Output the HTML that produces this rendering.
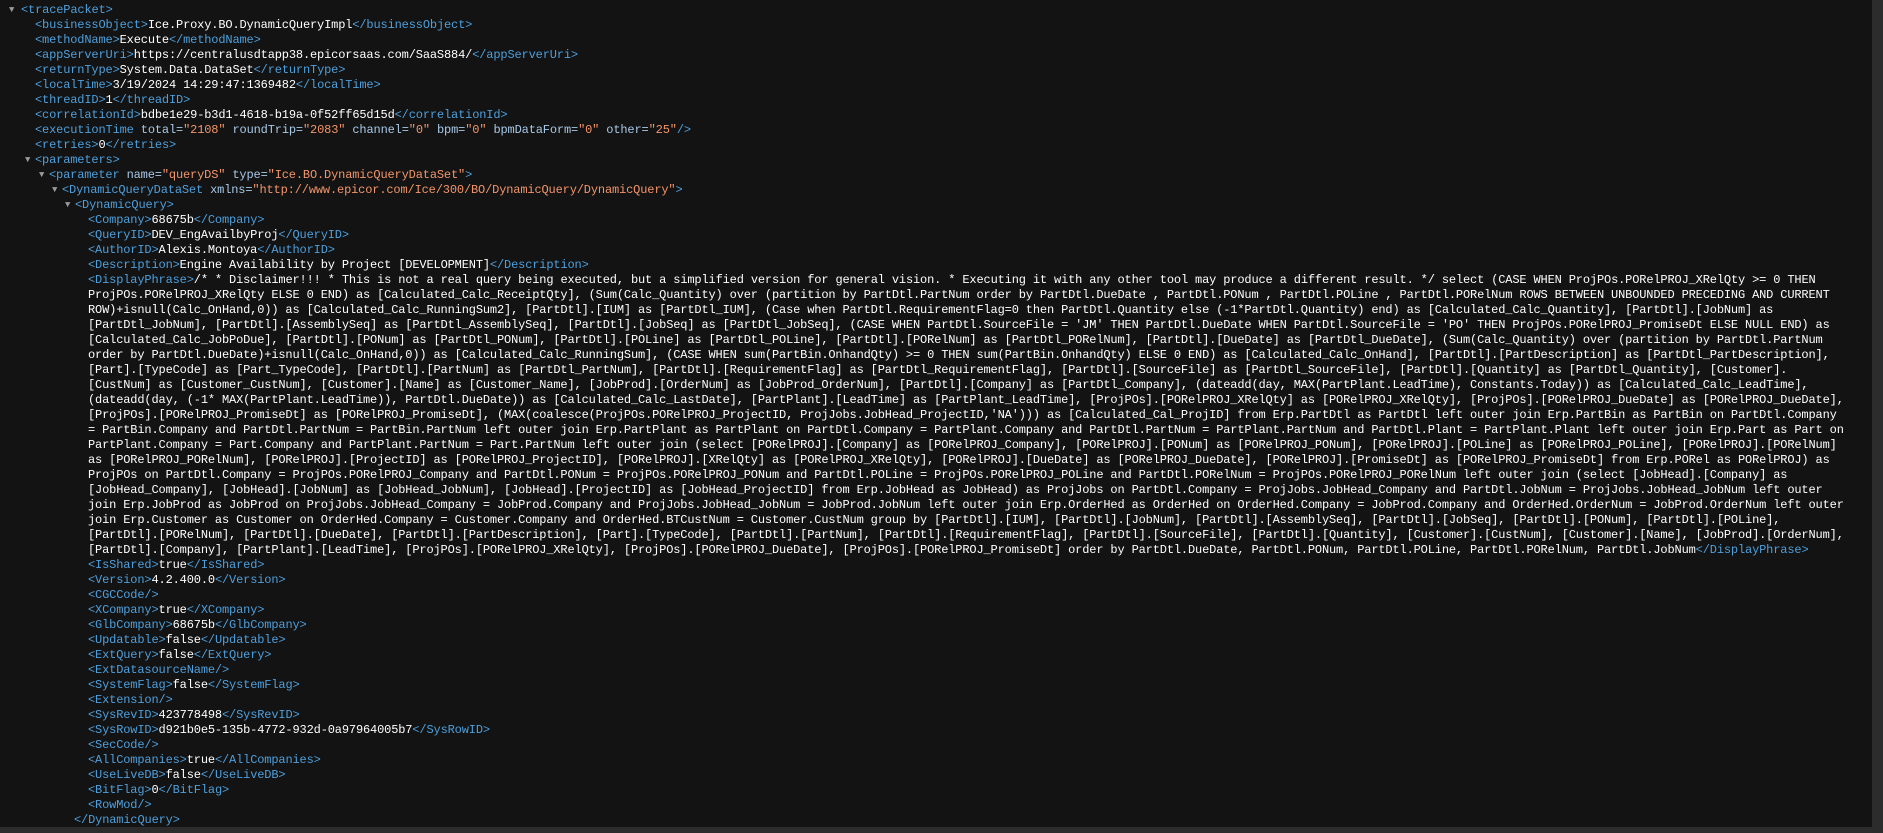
<!DOCTYPE html>
<html><head><meta charset="utf-8">
<style>
html,body{margin:0;padding:0;background:#131313;width:1883px;height:833px;overflow:hidden;}
#c{position:relative;width:1883px;height:833px;font-family:"Liberation Mono",monospace;font-size:12px;letter-spacing:-0.15px;color:#ffffff;}
.l{position:absolute;height:15px;line-height:15px;white-space:pre;}
.t{color:#4f9fdc;}
.a{color:#a8c8e6;}
.v{color:#f2956a;}
.tri{position:absolute;color:#9a9a9a;font-size:9px;line-height:15px;}
#sb{position:absolute;left:1872px;top:0;width:11px;height:833px;background:#2c2c2c;}
#hb{position:absolute;left:0;top:827px;width:1872px;height:6px;background:#2c2c2c;}
</style></head><body><div id="c">
<span class="tri" style="left:9px;top:3px">▼</span>
<div class="l" style="left:21px;top:3px"><span class="t">&lt;tracePacket&gt;</span></div>
<div class="l" style="left:35px;top:18px"><span class="t">&lt;businessObject&gt;</span>Ice.Proxy.BO.DynamicQueryImpl<span class="t">&lt;/businessObject&gt;</span></div>
<div class="l" style="left:35px;top:33px"><span class="t">&lt;methodName&gt;</span>Execute<span class="t">&lt;/methodName&gt;</span></div>
<div class="l" style="left:35px;top:48px"><span class="t">&lt;appServerUri&gt;</span>https://centralusdtapp38.epicorsaas.com/SaaS884/<span class="t">&lt;/appServerUri&gt;</span></div>
<div class="l" style="left:35px;top:63px"><span class="t">&lt;returnType&gt;</span>System.Data.DataSet<span class="t">&lt;/returnType&gt;</span></div>
<div class="l" style="left:35px;top:78px"><span class="t">&lt;localTime&gt;</span>3/19/2024 14:29:47:1369482<span class="t">&lt;/localTime&gt;</span></div>
<div class="l" style="left:35px;top:93px"><span class="t">&lt;threadID&gt;</span>1<span class="t">&lt;/threadID&gt;</span></div>
<div class="l" style="left:35px;top:108px"><span class="t">&lt;correlationId&gt;</span>bdbe1e29-b3d1-4618-b19a-0f52ff65d15d<span class="t">&lt;/correlationId&gt;</span></div>
<div class="l" style="left:35px;top:123px"><span class="t">&lt;executionTime</span> <span class="a">total=</span><span class="v">"2108"</span> <span class="a">roundTrip=</span><span class="v">"2083"</span> <span class="a">channel=</span><span class="v">"0"</span> <span class="a">bpm=</span><span class="v">"0"</span> <span class="a">bpmDataForm=</span><span class="v">"0"</span> <span class="a">other=</span><span class="v">"25"</span><span class="t">/&gt;</span></div>
<div class="l" style="left:35px;top:138px"><span class="t">&lt;retries&gt;</span>0<span class="t">&lt;/retries&gt;</span></div>
<span class="tri" style="left:25px;top:153px">▼</span>
<div class="l" style="left:35px;top:153px"><span class="t">&lt;parameters&gt;</span></div>
<span class="tri" style="left:39px;top:168px">▼</span>
<div class="l" style="left:49px;top:168px"><span class="t">&lt;parameter</span> <span class="a">name=</span><span class="v">"queryDS"</span> <span class="a">type=</span><span class="v">"Ice.BO.DynamicQueryDataSet"</span><span class="t">&gt;</span></div>
<span class="tri" style="left:52px;top:183px">▼</span>
<div class="l" style="left:62px;top:183px"><span class="t">&lt;DynamicQueryDataSet</span> <span class="a">xmlns=</span><span class="v">"http://www.epicor.com/Ice/300/BO/DynamicQuery/DynamicQuery"</span><span class="t">&gt;</span></div>
<span class="tri" style="left:65px;top:198px">▼</span>
<div class="l" style="left:75px;top:198px"><span class="t">&lt;DynamicQuery&gt;</span></div>
<div class="l" style="left:88px;top:213px"><span class="t">&lt;Company&gt;</span>68675b<span class="t">&lt;/Company&gt;</span></div>
<div class="l" style="left:88px;top:228px"><span class="t">&lt;QueryID&gt;</span>DEV_EngAvailbyProj<span class="t">&lt;/QueryID&gt;</span></div>
<div class="l" style="left:88px;top:243px"><span class="t">&lt;AuthorID&gt;</span>Alexis.Montoya<span class="t">&lt;/AuthorID&gt;</span></div>
<div class="l" style="left:88px;top:258px"><span class="t">&lt;Description&gt;</span>Engine Availability by Project [DEVELOPMENT]<span class="t">&lt;/Description&gt;</span></div>
<div class="l" style="left:88px;top:273px"><span class="t">&lt;DisplayPhrase&gt;</span>/* * Disclaimer!!! * This is not a real query being executed, but a simplified version for general vision. * Executing it with any other tool may produce a different result. */ select (CASE WHEN ProjPOs.PORelPROJ_XRelQty &gt;= 0 THEN</div>
<div class="l" style="left:88px;top:288px">ProjPOs.PORelPROJ_XRelQty ELSE 0 END) as [Calculated_Calc_ReceiptQty], (Sum(Calc_Quantity) over (partition by PartDtl.PartNum order by PartDtl.DueDate , PartDtl.PONum , PartDtl.POLine , PartDtl.PORelNum ROWS BETWEEN UNBOUNDED PRECEDING AND CURRENT</div>
<div class="l" style="left:88px;top:303px">ROW)+isnull(Calc_OnHand,0)) as [Calculated_Calc_RunningSum2], [PartDtl].[IUM] as [PartDtl_IUM], (Case when PartDtl.RequirementFlag=0 then PartDtl.Quantity else (-1*PartDtl.Quantity) end) as [Calculated_Calc_Quantity], [PartDtl].[JobNum] as</div>
<div class="l" style="left:88px;top:318px">[PartDtl_JobNum], [PartDtl].[AssemblySeq] as [PartDtl_AssemblySeq], [PartDtl].[JobSeq] as [PartDtl_JobSeq], (CASE WHEN PartDtl.SourceFile = 'JM' THEN PartDtl.DueDate WHEN PartDtl.SourceFile = 'PO' THEN ProjPOs.PORelPROJ_PromiseDt ELSE NULL END) as</div>
<div class="l" style="left:88px;top:333px">[Calculated_Calc_JobPoDue], [PartDtl].[PONum] as [PartDtl_PONum], [PartDtl].[POLine] as [PartDtl_POLine], [PartDtl].[PORelNum] as [PartDtl_PORelNum], [PartDtl].[DueDate] as [PartDtl_DueDate], (Sum(Calc_Quantity) over (partition by PartDtl.PartNum</div>
<div class="l" style="left:88px;top:348px">order by PartDtl.DueDate)+isnull(Calc_OnHand,0)) as [Calculated_Calc_RunningSum], (CASE WHEN sum(PartBin.OnhandQty) &gt;= 0 THEN sum(PartBin.OnhandQty) ELSE 0 END) as [Calculated_Calc_OnHand], [PartDtl].[PartDescription] as [PartDtl_PartDescription],</div>
<div class="l" style="left:88px;top:363px">[Part].[TypeCode] as [Part_TypeCode], [PartDtl].[PartNum] as [PartDtl_PartNum], [PartDtl].[RequirementFlag] as [PartDtl_RequirementFlag], [PartDtl].[SourceFile] as [PartDtl_SourceFile], [PartDtl].[Quantity] as [PartDtl_Quantity], [Customer].</div>
<div class="l" style="left:88px;top:378px">[CustNum] as [Customer_CustNum], [Customer].[Name] as [Customer_Name], [JobProd].[OrderNum] as [JobProd_OrderNum], [PartDtl].[Company] as [PartDtl_Company], (dateadd(day, MAX(PartPlant.LeadTime), Constants.Today)) as [Calculated_Calc_LeadTime],</div>
<div class="l" style="left:88px;top:393px">(dateadd(day, (-1* MAX(PartPlant.LeadTime)), PartDtl.DueDate)) as [Calculated_Calc_LastDate], [PartPlant].[LeadTime] as [PartPlant_LeadTime], [ProjPOs].[PORelPROJ_XRelQty] as [PORelPROJ_XRelQty], [ProjPOs].[PORelPROJ_DueDate] as [PORelPROJ_DueDate],</div>
<div class="l" style="left:88px;top:408px">[ProjPOs].[PORelPROJ_PromiseDt] as [PORelPROJ_PromiseDt], (MAX(coalesce(ProjPOs.PORelPROJ_ProjectID, ProjJobs.JobHead_ProjectID,'NA'))) as [Calculated_Cal_ProjID] from Erp.PartDtl as PartDtl left outer join Erp.PartBin as PartBin on PartDtl.Company</div>
<div class="l" style="left:88px;top:423px">= PartBin.Company and PartDtl.PartNum = PartBin.PartNum left outer join Erp.PartPlant as PartPlant on PartDtl.Company = PartPlant.Company and PartDtl.PartNum = PartPlant.PartNum and PartDtl.Plant = PartPlant.Plant left outer join Erp.Part as Part on</div>
<div class="l" style="left:88px;top:438px">PartPlant.Company = Part.Company and PartPlant.PartNum = Part.PartNum left outer join (select [PORelPROJ].[Company] as [PORelPROJ_Company], [PORelPROJ].[PONum] as [PORelPROJ_PONum], [PORelPROJ].[POLine] as [PORelPROJ_POLine], [PORelPROJ].[PORelNum]</div>
<div class="l" style="left:88px;top:453px">as [PORelPROJ_PORelNum], [PORelPROJ].[ProjectID] as [PORelPROJ_ProjectID], [PORelPROJ].[XRelQty] as [PORelPROJ_XRelQty], [PORelPROJ].[DueDate] as [PORelPROJ_DueDate], [PORelPROJ].[PromiseDt] as [PORelPROJ_PromiseDt] from Erp.PORel as PORelPROJ) as</div>
<div class="l" style="left:88px;top:468px">ProjPOs on PartDtl.Company = ProjPOs.PORelPROJ_Company and PartDtl.PONum = ProjPOs.PORelPROJ_PONum and PartDtl.POLine = ProjPOs.PORelPROJ_POLine and PartDtl.PORelNum = ProjPOs.PORelPROJ_PORelNum left outer join (select [JobHead].[Company] as</div>
<div class="l" style="left:88px;top:483px">[JobHead_Company], [JobHead].[JobNum] as [JobHead_JobNum], [JobHead].[ProjectID] as [JobHead_ProjectID] from Erp.JobHead as JobHead) as ProjJobs on PartDtl.Company = ProjJobs.JobHead_Company and PartDtl.JobNum = ProjJobs.JobHead_JobNum left outer</div>
<div class="l" style="left:88px;top:498px">join Erp.JobProd as JobProd on ProjJobs.JobHead_Company = JobProd.Company and ProjJobs.JobHead_JobNum = JobProd.JobNum left outer join Erp.OrderHed as OrderHed on OrderHed.Company = JobProd.Company and OrderHed.OrderNum = JobProd.OrderNum left outer</div>
<div class="l" style="left:88px;top:513px">join Erp.Customer as Customer on OrderHed.Company = Customer.Company and OrderHed.BTCustNum = Customer.CustNum group by [PartDtl].[IUM], [PartDtl].[JobNum], [PartDtl].[AssemblySeq], [PartDtl].[JobSeq], [PartDtl].[PONum], [PartDtl].[POLine],</div>
<div class="l" style="left:88px;top:528px">[PartDtl].[PORelNum], [PartDtl].[DueDate], [PartDtl].[PartDescription], [Part].[TypeCode], [PartDtl].[PartNum], [PartDtl].[RequirementFlag], [PartDtl].[SourceFile], [PartDtl].[Quantity], [Customer].[CustNum], [Customer].[Name], [JobProd].[OrderNum],</div>
<div class="l" style="left:88px;top:543px">[PartDtl].[Company], [PartPlant].[LeadTime], [ProjPOs].[PORelPROJ_XRelQty], [ProjPOs].[PORelPROJ_DueDate], [ProjPOs].[PORelPROJ_PromiseDt] order by PartDtl.DueDate, PartDtl.PONum, PartDtl.POLine, PartDtl.PORelNum, PartDtl.JobNum<span class="t">&lt;/DisplayPhrase&gt;</span></div>
<div class="l" style="left:88px;top:558px"><span class="t">&lt;IsShared&gt;</span>true<span class="t">&lt;/IsShared&gt;</span></div>
<div class="l" style="left:88px;top:573px"><span class="t">&lt;Version&gt;</span>4.2.400.0<span class="t">&lt;/Version&gt;</span></div>
<div class="l" style="left:88px;top:588px"><span class="t">&lt;CGCCode/&gt;</span></div>
<div class="l" style="left:88px;top:603px"><span class="t">&lt;XCompany&gt;</span>true<span class="t">&lt;/XCompany&gt;</span></div>
<div class="l" style="left:88px;top:618px"><span class="t">&lt;GlbCompany&gt;</span>68675b<span class="t">&lt;/GlbCompany&gt;</span></div>
<div class="l" style="left:88px;top:633px"><span class="t">&lt;Updatable&gt;</span>false<span class="t">&lt;/Updatable&gt;</span></div>
<div class="l" style="left:88px;top:648px"><span class="t">&lt;ExtQuery&gt;</span>false<span class="t">&lt;/ExtQuery&gt;</span></div>
<div class="l" style="left:88px;top:663px"><span class="t">&lt;ExtDatasourceName/&gt;</span></div>
<div class="l" style="left:88px;top:678px"><span class="t">&lt;SystemFlag&gt;</span>false<span class="t">&lt;/SystemFlag&gt;</span></div>
<div class="l" style="left:88px;top:693px"><span class="t">&lt;Extension/&gt;</span></div>
<div class="l" style="left:88px;top:708px"><span class="t">&lt;SysRevID&gt;</span>423778498<span class="t">&lt;/SysRevID&gt;</span></div>
<div class="l" style="left:88px;top:723px"><span class="t">&lt;SysRowID&gt;</span>d921b0e5-135b-4772-932d-0a97964005b7<span class="t">&lt;/SysRowID&gt;</span></div>
<div class="l" style="left:88px;top:738px"><span class="t">&lt;SecCode/&gt;</span></div>
<div class="l" style="left:88px;top:753px"><span class="t">&lt;AllCompanies&gt;</span>true<span class="t">&lt;/AllCompanies&gt;</span></div>
<div class="l" style="left:88px;top:768px"><span class="t">&lt;UseLiveDB&gt;</span>false<span class="t">&lt;/UseLiveDB&gt;</span></div>
<div class="l" style="left:88px;top:783px"><span class="t">&lt;BitFlag&gt;</span>0<span class="t">&lt;/BitFlag&gt;</span></div>
<div class="l" style="left:88px;top:798px"><span class="t">&lt;RowMod/&gt;</span></div>
<div class="l" style="left:74px;top:813px"><span class="t">&lt;/DynamicQuery&gt;</span></div>
<div id="hb"></div>
<div id="sb"></div>
</div></body></html>
